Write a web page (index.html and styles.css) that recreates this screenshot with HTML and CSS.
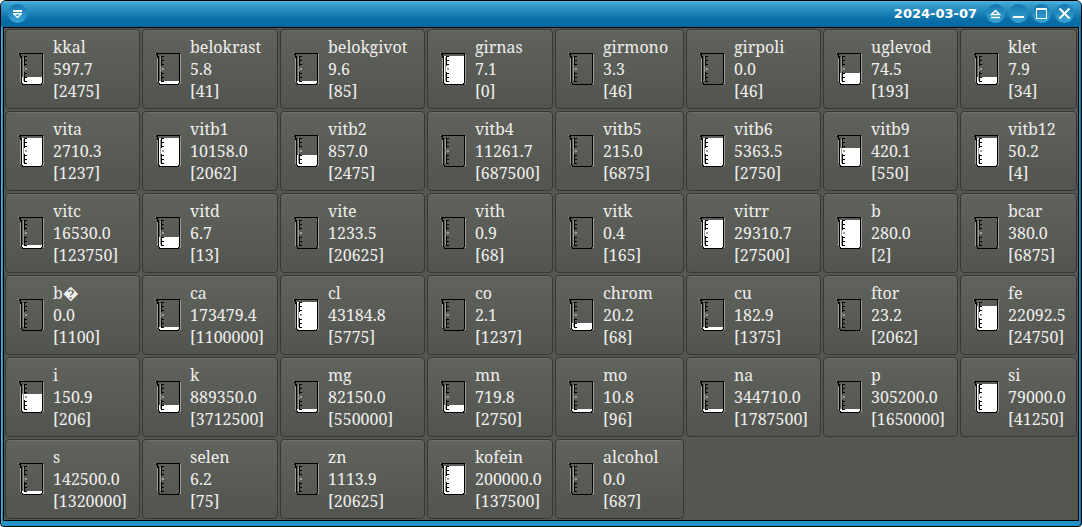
FILE: index.html
```html
<!DOCTYPE html>
<html lang="en">
<head>
<meta charset="utf-8">
<title>2024-03-07</title>
<link rel="stylesheet" href="styles.css">
</head>
<body>
<svg class="sprites" aria-hidden="true">
  <symbol id="beaker" viewBox="0 0 27 32">
    <path fill="#9a9c96" d="M25 1h1v30h-1zM2 5h1v24h-1zM5 4h1v24h-1zM7 15h2v2h-2zM0 0h1v1h-1z"/>
    <path fill="#000" d="M1 0h24v1h-24zM1 1h2v1h-2zM2 2h1v1h-1zM2 3h2v2h-2zM3 5h1v25h-1zM24 1h1v29h-1zM4 30h1v1h-1zM4 31h20v1h-20zM23 30h1v1h-1zM6 3h1v10h-1zM6 19h1v10h-1zM7 3h2v1h-2zM7 7h2v1h-2zM7 11h2v1h-2zM7 20h2v1h-2zM7 24h2v1h-2zM7 28h2v1h-2z"/>
  </symbol>
</svg>
<div class="window">
  <header class="titlebar">
    <button class="tool" aria-label="Window menu"><svg width="19" height="19"><path class="solid" fill-rule="evenodd" d="M5 6h9v2h-9zM5 9h9v1l-4 4h-1l-4 -4zM7 10.500l2.500 2 2.500-2z"/></svg></button>
    <h1 class="title">2024-03-07</h1>
    <button class="tool" aria-label="Shade"><svg width="19" height="19"><path class="thin" d="M5.500 10.500h8l-4-4zM5 13.500h9"/></svg></button>
    <button class="tool" aria-label="Minimize"><svg width="19" height="19"><path class="solid" d="M4 12h11v2h-11z"/></svg></button>
    <button class="tool" aria-label="Maximize"><svg width="19" height="19"><path class="solid" fill-rule="evenodd" d="M4 4h11v11h-11zM5 6v8h9v-8z"/></svg></button>
    <button class="tool" aria-label="Close"><svg width="19" height="19"><path class="line" d="M4.500 4.500l10 10M14.500 4.500l-10 10"/></svg></button>
  </header>
  <main class="grid">
    <button class="cell"><svg class="icon"><rect class="fill" x="4" y="24" width="20" height="7"/><use href="#beaker"/></svg><span>kkal<br>597.7<br>[2475]</span></button>
    <button class="cell"><svg class="icon"><rect class="fill" x="4" y="28" width="20" height="3"/><use href="#beaker"/></svg><span>belokrast<br>5.8<br>[41]</span></button>
    <button class="cell"><svg class="icon"><rect class="fill" x="4" y="28" width="20" height="3"/><use href="#beaker"/></svg><span>belokgivot<br>9.6<br>[85]</span></button>
    <button class="cell"><svg class="icon"><rect class="fill" x="4" y="3" width="20" height="28"/><use href="#beaker"/></svg><span>girnas<br>7.1<br>[0]</span></button>
    <button class="cell"><svg class="icon"><use href="#beaker"/></svg><span>girmono<br>3.3<br>[46]</span></button>
    <button class="cell"><svg class="icon"><use href="#beaker"/></svg><span>girpoli<br>0.0<br>[46]</span></button>
    <button class="cell"><svg class="icon"><rect class="fill" x="4" y="20" width="20" height="11"/><use href="#beaker"/></svg><span>uglevod<br>74.5<br>[193]</span></button>
    <button class="cell"><svg class="icon"><rect class="fill" x="4" y="24" width="20" height="7"/><use href="#beaker"/></svg><span>klet<br>7.9<br>[34]</span></button>

    <button class="cell"><svg class="icon"><rect class="fill" x="4" y="3" width="20" height="28"/><use href="#beaker"/></svg><span>vita<br>2710.3<br>[1237]</span></button>
    <button class="cell"><svg class="icon"><rect class="fill" x="4" y="3" width="20" height="28"/><use href="#beaker"/></svg><span>vitb1<br>10158.0<br>[2062]</span></button>
    <button class="cell"><svg class="icon"><rect class="fill" x="4" y="20" width="20" height="11"/><use href="#beaker"/></svg><span>vitb2<br>857.0<br>[2475]</span></button>
    <button class="cell"><svg class="icon"><use href="#beaker"/></svg><span>vitb4<br>11261.7<br>[687500]</span></button>
    <button class="cell"><svg class="icon"><use href="#beaker"/></svg><span>vitb5<br>215.0<br>[6875]</span></button>
    <button class="cell"><svg class="icon"><rect class="fill" x="4" y="3" width="20" height="28"/><use href="#beaker"/></svg><span>vitb6<br>5363.5<br>[2750]</span></button>
    <button class="cell"><svg class="icon"><rect class="fill" x="4" y="13" width="20" height="18"/><use href="#beaker"/></svg><span>vitb9<br>420.1<br>[550]</span></button>
    <button class="cell"><svg class="icon"><rect class="fill" x="4" y="3" width="20" height="28"/><use href="#beaker"/></svg><span>vitb12<br>50.2<br>[4]</span></button>

    <button class="cell"><svg class="icon"><rect class="fill" x="4" y="28" width="20" height="3"/><use href="#beaker"/></svg><span>vitc<br>16530.0<br>[123750]</span></button>
    <button class="cell"><svg class="icon"><rect class="fill" x="4" y="20" width="20" height="11"/><use href="#beaker"/></svg><span>vitd<br>6.7<br>[13]</span></button>
    <button class="cell"><svg class="icon"><use href="#beaker"/></svg><span>vite<br>1233.5<br>[20625]</span></button>
    <button class="cell"><svg class="icon"><use href="#beaker"/></svg><span>vith<br>0.9<br>[68]</span></button>
    <button class="cell"><svg class="icon"><use href="#beaker"/></svg><span>vitk<br>0.4<br>[165]</span></button>
    <button class="cell"><svg class="icon"><rect class="fill" x="4" y="3" width="20" height="28"/><use href="#beaker"/></svg><span>vitrr<br>29310.7<br>[27500]</span></button>
    <button class="cell"><svg class="icon"><rect class="fill" x="4" y="3" width="20" height="28"/><use href="#beaker"/></svg><span>b<br>280.0<br>[2]</span></button>
    <button class="cell"><svg class="icon"><use href="#beaker"/></svg><span>bcar<br>380.0<br>[6875]</span></button>

    <button class="cell"><svg class="icon"><use href="#beaker"/></svg><span>b&#xFFFD;<br>0.0<br>[1100]</span></button>
    <button class="cell"><svg class="icon"><rect class="fill" x="4" y="28" width="20" height="3"/><use href="#beaker"/></svg><span>ca<br>173479.4<br>[1100000]</span></button>
    <button class="cell"><svg class="icon"><rect class="fill" x="4" y="3" width="20" height="28"/><use href="#beaker"/></svg><span>cl<br>43184.8<br>[5775]</span></button>
    <button class="cell"><svg class="icon"><use href="#beaker"/></svg><span>co<br>2.1<br>[1237]</span></button>
    <button class="cell"><svg class="icon"><rect class="fill" x="4" y="24" width="20" height="7"/><use href="#beaker"/></svg><span>chrom<br>20.2<br>[68]</span></button>
    <button class="cell"><svg class="icon"><rect class="fill" x="4" y="28" width="20" height="3"/><use href="#beaker"/></svg><span>cu<br>182.9<br>[1375]</span></button>
    <button class="cell"><svg class="icon"><use href="#beaker"/></svg><span>ftor<br>23.2<br>[2062]</span></button>
    <button class="cell"><svg class="icon"><rect class="fill" x="4" y="7" width="20" height="24"/><use href="#beaker"/></svg><span>fe<br>22092.5<br>[24750]</span></button>

    <button class="cell"><svg class="icon"><rect class="fill" x="4" y="13" width="20" height="18"/><use href="#beaker"/></svg><span>i<br>150.9<br>[206]</span></button>
    <button class="cell"><svg class="icon"><rect class="fill" x="4" y="24" width="20" height="7"/><use href="#beaker"/></svg><span>k<br>889350.0<br>[3712500]</span></button>
    <button class="cell"><svg class="icon"><rect class="fill" x="4" y="28" width="20" height="3"/><use href="#beaker"/></svg><span>mg<br>82150.0<br>[550000]</span></button>
    <button class="cell"><svg class="icon"><rect class="fill" x="4" y="24" width="20" height="7"/><use href="#beaker"/></svg><span>mn<br>719.8<br>[2750]</span></button>
    <button class="cell"><svg class="icon"><rect class="fill" x="4" y="28" width="20" height="3"/><use href="#beaker"/></svg><span>mo<br>10.8<br>[96]</span></button>
    <button class="cell"><svg class="icon"><rect class="fill" x="4" y="28" width="20" height="3"/><use href="#beaker"/></svg><span>na<br>344710.0<br>[1787500]</span></button>
    <button class="cell"><svg class="icon"><rect class="fill" x="4" y="28" width="20" height="3"/><use href="#beaker"/></svg><span>p<br>305200.0<br>[1650000]</span></button>
    <button class="cell"><svg class="icon"><rect class="fill" x="4" y="3" width="20" height="28"/><use href="#beaker"/></svg><span>si<br>79000.0<br>[41250]</span></button>

    <button class="cell"><svg class="icon"><rect class="fill" x="4" y="28" width="20" height="3"/><use href="#beaker"/></svg><span>s<br>142500.0<br>[1320000]</span></button>
    <button class="cell"><svg class="icon"><use href="#beaker"/></svg><span>selen<br>6.2<br>[75]</span></button>
    <button class="cell"><svg class="icon"><use href="#beaker"/></svg><span>zn<br>1113.9<br>[20625]</span></button>
    <button class="cell"><svg class="icon"><rect class="fill" x="4" y="3" width="20" height="28"/><use href="#beaker"/></svg><span>kofein<br>200000.0<br>[137500]</span></button>
    <button class="cell"><svg class="icon"><use href="#beaker"/></svg><span>alcohol<br>0.0<br>[687]</span></button>
  </main>
</div>
</body>
</html>
```
FILE: styles.css
```css
* {
  box-sizing: border-box;
}

body {
  margin: 0;
  background: #fff;
}

.sprites {
  position: absolute;
  width: 0;
  height: 0;
}

.window {
  border: 1px solid #000;
  border-radius: 6px 6px 4px 4px;
  padding: 0 2px 5px;
  background: #2494c8;
  box-shadow: inset 1px 0 #48b0dc, inset -1px 0 #1478ac;
  overflow: hidden;
}

.titlebar {
  display: flex;
  align-items: flex-start;
  gap: 4px;
  height: 26px;
  margin: 0 -2px;
  padding: 3px 7px 0;
  background: linear-gradient(#50b4e0 0, #38a0d0 3px, #0c70a8 18px, #0468a0 26px);
}

.title {
  flex: 1;
  margin: 0;
  padding-right: 5px;
  color: #fff;
  font: bold 13px/20px "DejaVu Sans", sans-serif;
  text-align: right;
}

.tool {
  width: 19px;
  height: 19px;
  padding: 0;
  border: 0;
  border-radius: 50%;
  background: linear-gradient(#1478b0, #38a4d4);
}

.tool svg {
  display: block;
}

.solid {
  fill: #fff;
}

.line {
  fill: none;
  stroke: #fff;
  stroke-width: 2;
}

.thin {
  fill: none;
  stroke: #fff;
  stroke-width: 1.5;
}

.grid {
  display: grid;
  grid-template-columns: 135fr 136fr 145fr 126fr 129fr 135fr 135fr 117fr;
  gap: 2px;
  padding: 1px;
  border: 1px solid #000;
  background: #545650;
}

.cell {
  display: flex;
  align-items: center;
  gap: 8px;
  min-width: 0;
  padding: 6px 0 6px 12px;
  border: 1px solid #363834;
  border-radius: 4px;
  background: linear-gradient(#60625c, #52544f);
  box-shadow: inset 0 1px #6c6e68;
  color: #eeeeec;
  font: 16px/22px "Noto Serif", "Droid Serif", "DejaVu Serif Condensed", "DejaVu Serif", serif;
  text-align: left;
  white-space: nowrap;
}

.icon {
  flex: none;
  width: 27px;
  height: 32px;
  shape-rendering: crispEdges;
}

.fill {
  fill: #fff;
}
```
